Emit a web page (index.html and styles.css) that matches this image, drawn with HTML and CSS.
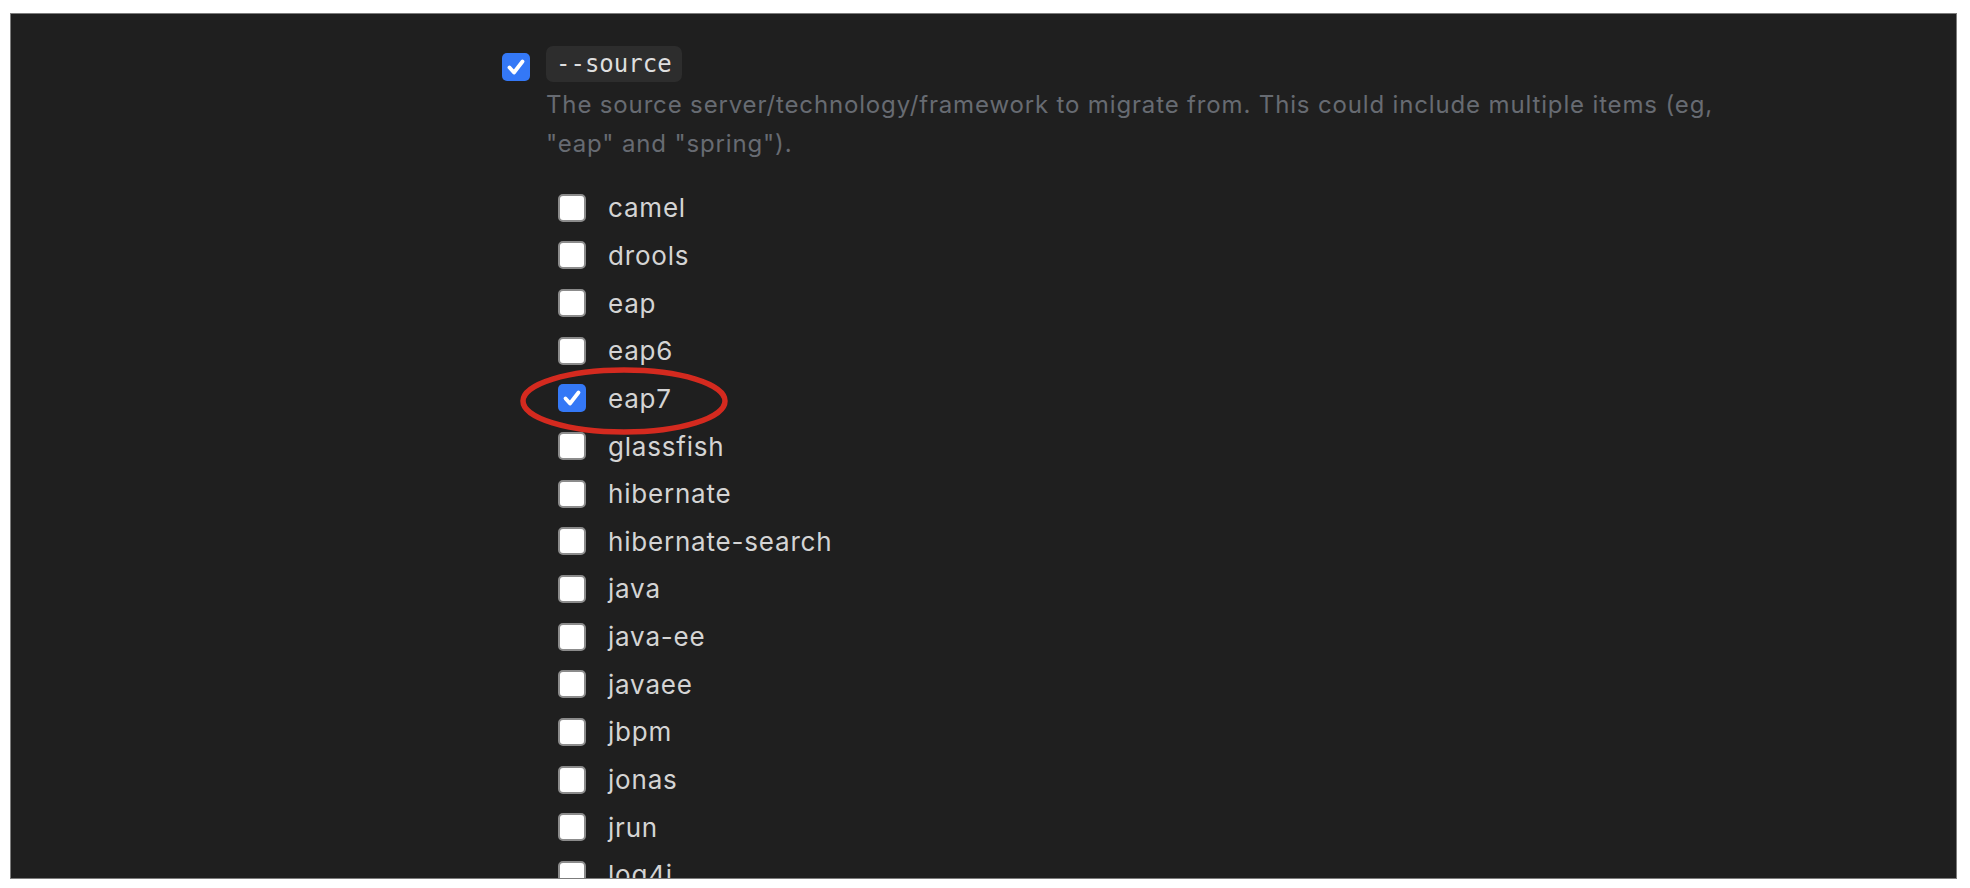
FILE: index.html
```html
<!DOCTYPE html>
<html>
<head>
<meta charset="utf-8">
<link rel="stylesheet" href="styles.css">
</head>
<body>
<div class="panel">
  <div class="option">
    <span class="cb cb-on"><svg viewBox="0 0 28 28"><path d="M7.5 14.5 L12 19.5 L20.5 8.5" fill="none" stroke="#fff" stroke-width="3.8" stroke-linecap="round" stroke-linejoin="round"/></svg></span>
    <div class="option-body">
      <code class="flag">--source</code>
      <p class="desc">The source server/technology/framework to migrate from. This could include multiple items (eg, "eap" and "spring").</p>
      <ul class="choices">
        <li class="choice"><span class="cb"></span><span>camel</span></li>
        <li class="choice"><span class="cb"></span><span>drools</span></li>
        <li class="choice"><span class="cb"></span><span>eap</span></li>
        <li class="choice"><span class="cb"></span><span>eap6</span></li>
        <li class="choice marked"><span class="cb cb-on"><svg viewBox="0 0 28 28"><path d="M7.5 14.5 L12 19.5 L20.5 8.5" fill="none" stroke="#fff" stroke-width="3.8" stroke-linecap="round" stroke-linejoin="round"/></svg></span><span>eap7</span>
          <svg class="ring" viewBox="0 0 212 72"><ellipse cx="106" cy="36" rx="101" ry="31" fill="none" stroke="#d42a1f" stroke-width="5.5"/></svg>
        </li>
        <li class="choice"><span class="cb"></span><span>glassfish</span></li>
        <li class="choice"><span class="cb"></span><span>hibernate</span></li>
        <li class="choice"><span class="cb"></span><span>hibernate-search</span></li>
        <li class="choice"><span class="cb"></span><span>java</span></li>
        <li class="choice"><span class="cb"></span><span>java-ee</span></li>
        <li class="choice"><span class="cb"></span><span>javaee</span></li>
        <li class="choice"><span class="cb"></span><span>jbpm</span></li>
        <li class="choice"><span class="cb"></span><span>jonas</span></li>
        <li class="choice"><span class="cb"></span><span>jrun</span></li>
        <li class="choice"><span class="cb"></span><span>log4j</span></li>
        <li class="choice"><span class="cb"></span><span>log4j2</span></li>
      </ul>
    </div>
  </div>
</div>
</body>
</html>
```
FILE: styles.css
```css
html, body {
  margin: 0;
  padding: 0;
  background: #ffffff;
}
body {
  padding: 13px 0 0 10px;
  font-family: "Inter", "Liberation Sans", sans-serif;
}
.panel {
  box-sizing: border-box;
  width: 1947px;
  height: 866px;
  background: #1f1f1f;
  border: 1px solid #7c7c7c;
  overflow: hidden;
  padding: 32px 0 0 491px;
}
.option {
  display: flex;
  gap: 16px;
  align-items: flex-start;
}
.cb {
  box-sizing: border-box;
  flex: none;
  width: 28px;
  height: 28px;
  border-radius: 5px;
  background: #ffffff;
  border: 2px solid #8b8b8b;
  display: inline-flex;
  align-items: center;
  justify-content: center;
}
.cb-on {
  background: #3478f6;
  border: none;
}
.cb svg {
  width: 28px;
  height: 28px;
  display: block;
}
.option > .cb {
  margin-top: 7px;
}
.option-body {
  display: flex;
  flex-direction: column;
  align-items: flex-start;
}
.flag {
  font-family: "DejaVu Sans Mono", "Liberation Mono", monospace;
  font-size: 24px;
  line-height: 36px;
  height: 36px;
  padding: 0 10px;
  border-radius: 7px;
  background: #2d2d2d;
  color: #dedede;
}
.desc {
  margin: 3px 0 0 0;
  width: 1200px;
  font-size: 24px;
  letter-spacing: 0.85px;
  line-height: 39px;
  color: #676b72;
}
.choices {
  list-style: none;
  margin: 21px 0 0 12px;
  padding: 0;
}
.choice {
  position: relative;
  display: flex;
  align-items: center;
  gap: 22px;
  height: 47.65px;
  font-size: 26px;
  letter-spacing: 0.8px;
  color: #d4d4d4;
}
.ring {
  position: absolute;
  left: -40px;
  top: -10px;
  width: 212px;
  height: 72px;
  pointer-events: none;
}
```
